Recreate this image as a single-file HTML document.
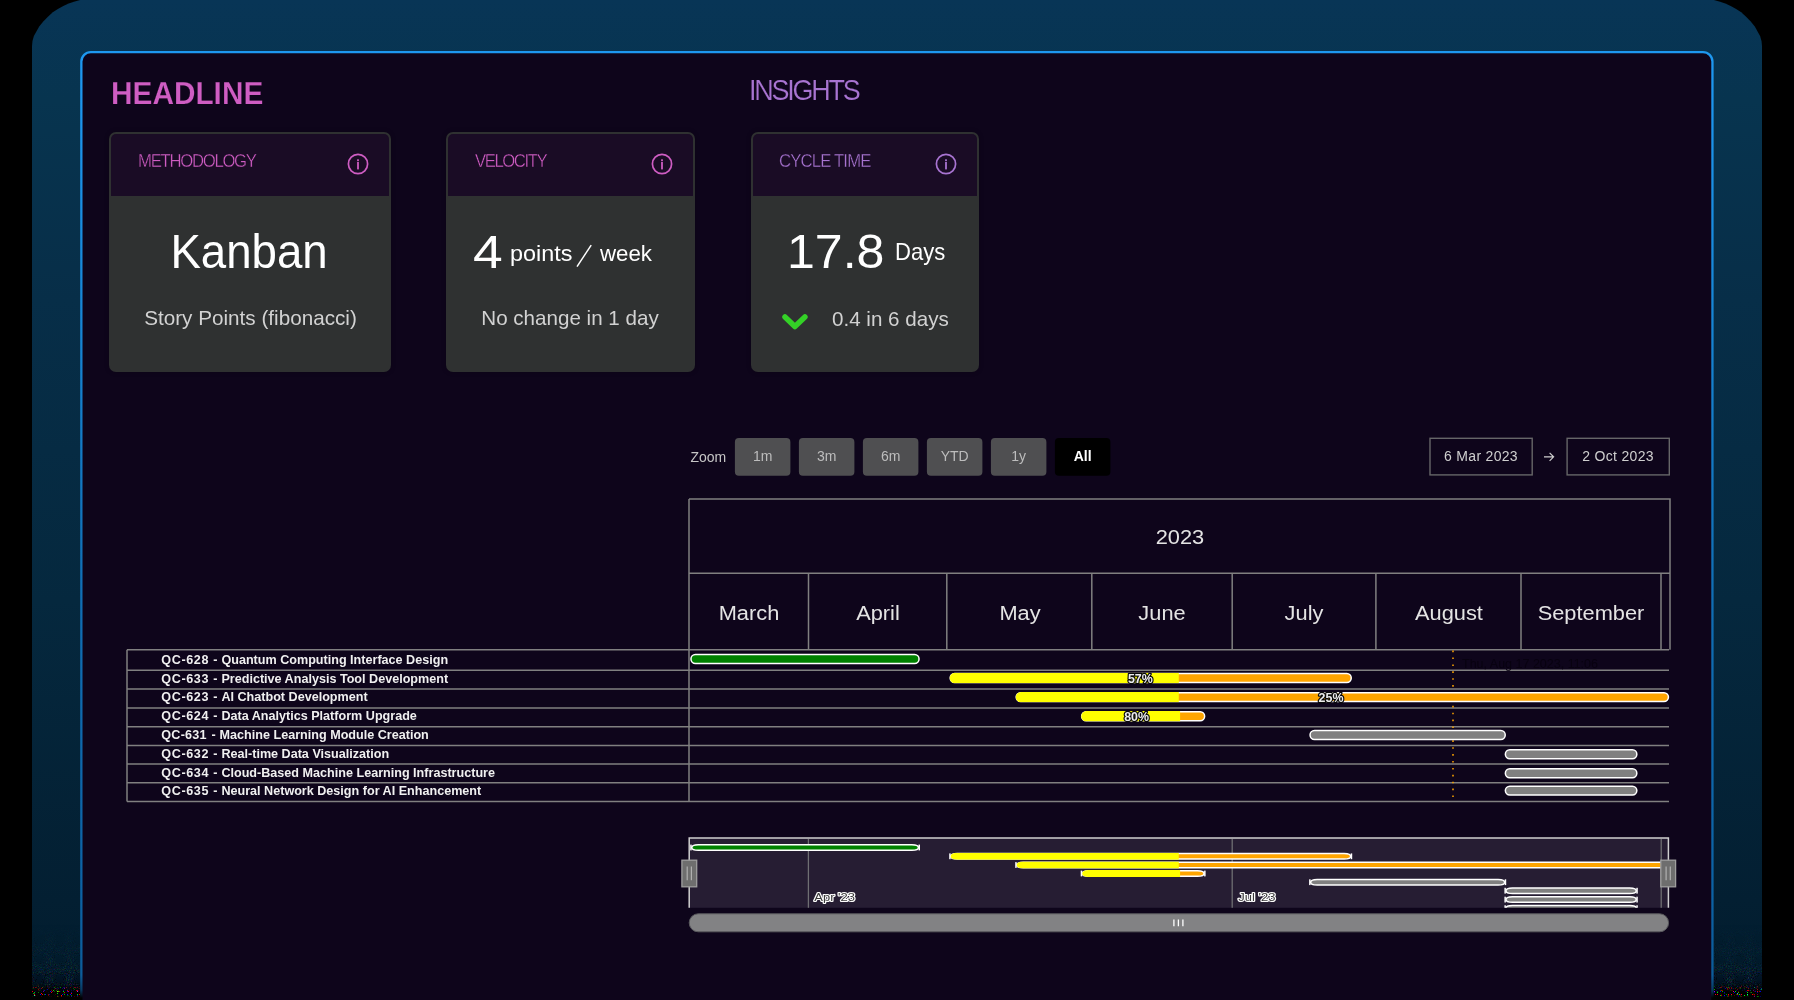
<!DOCTYPE html><html><head><meta charset="utf-8"><title>Dashboard</title><style>
*{box-sizing:border-box;margin:0;padding:0}
html,body{width:1794px;height:1000px;overflow:hidden;background:#000;font-family:"Liberation Sans", sans-serif;}
#fg{position:absolute;left:0;top:0;width:1794px;height:1000px;will-change:transform}
#root{position:relative;width:1794px;height:1000px;overflow:hidden;background:#000}
.frame{position:absolute;left:32px;top:0;width:1730px;height:1010px;clip-path:polygon(0.0px 1010.0px,0.0px 46.0px,0.5px 41.0px,1.9px 36.0px,4.3px 31.7px,7.2px 26.6px,11.5px 21.2px,16.2px 16.6px,20.8px 12.2px,25.9px 9.0px,31.3px 6.1px,36.7px 3.6px,42.8px 1.4px,48.2px 0.0px,1681.8px 0.0px,1687.2px 1.4px,1693.3px 3.6px,1698.7px 6.1px,1704.1px 9.0px,1709.2px 12.2px,1713.8px 16.6px,1718.5px 21.2px,1722.8px 26.6px,1725.7px 31.7px,1728.1px 36.0px,1729.5px 41.0px,1730.0px 46.0px,1730.0px 1010.0px);
 background:linear-gradient(180deg,#083556 0px,#07344f 100px,#072e48 300px,#05283e 600px,#031f32 900px,#021d2f 965px,#02172a 980px,#010d18 989px,#010509 994px,#000 997px);}
.card{position:absolute;top:132px;height:240px;background:#2f3131;border-radius:7px;padding:2px;box-shadow:0 0 5px rgba(0,0,0,.22)}
.chead{height:62px;background:#1a0c25;border-radius:5px 5px 0 0}
.zb{position:absolute;top:438px;width:55.5px;height:37.6px;border-radius:3px;background:#4f4f51;color:#bdbdbd;font-size:14px;line-height:37.6px;text-align:center}
.zb.act{background:#000;color:#fff;font-weight:bold}
.db{position:absolute;top:437.6px;width:104px;height:38px;border:1.4px solid #6b6b6b;color:#cfcfcf;font-size:14px;line-height:35px;text-align:center;letter-spacing:0.3px}
</style></head><body><div id="root"><div class="frame"></div>
<svg style="position:absolute;left:0;top:0" width="1794" height="1000" viewBox="0 0 1794 1000"><defs><linearGradient id="bgr" gradientUnits="userSpaceOnUse" x1="0" y1="0" x2="0" y2="1000"><stop offset="0" stop-color="#1e9af2"/><stop offset="0.1" stop-color="#1d96ee"/><stop offset="0.3" stop-color="#1787d7"/><stop offset="0.6" stop-color="#106eb4"/><stop offset="0.9" stop-color="#0c62a4"/><stop offset="0.975" stop-color="#0c5c9a"/><stop offset="0.99" stop-color="#083a62"/><stop offset="0.998" stop-color="#000"/></linearGradient><linearGradient id="nm" gradientUnits="userSpaceOnUse" x1="0" y1="900" x2="0" y2="997"><stop offset="0.25" stop-color="#fff" stop-opacity="0"/><stop offset="0.6" stop-color="#fff" stop-opacity="0.3"/><stop offset="0.9" stop-color="#fff" stop-opacity="0.8"/><stop offset="1" stop-color="#fff" stop-opacity="1"/></linearGradient><mask id="nmask" maskUnits="userSpaceOnUse" x="0" y="890" width="1794" height="110"><rect x="32" y="900" width="48" height="97" fill="url(#nm)"/><rect x="1714" y="900" width="48" height="97" fill="url(#nm)"/></mask><filter id="nz" x="0" y="0" width="100%" height="100%" color-interpolation-filters="sRGB"><feTurbulence type="fractalNoise" baseFrequency="0.95" numOctaves="1" seed="7"/><feColorMatrix type="matrix" values="7 0 0 0 -4.0  0 7 0 0 -4.0  0 0 7 0 -4.0  0 0 0 0 1"/></filter><filter id="nz3" x="0" y="0" width="100%" height="100%" color-interpolation-filters="sRGB"><feTurbulence type="fractalNoise" baseFrequency="1.7" numOctaves="1" seed="11"/><feColorMatrix type="matrix" values="14 0 0 0 -8.9  0 14 0 0 -8.9  0 0 14 0 -8.9  0 0 0 0 1"/></filter><linearGradient id="bm" gradientUnits="userSpaceOnUse" x1="0" y1="984" x2="0" y2="997"><stop offset="0" stop-color="#fff" stop-opacity="0"/><stop offset="0.6" stop-color="#fff" stop-opacity="0.9"/><stop offset="0.92" stop-color="#fff" stop-opacity="1"/><stop offset="1" stop-color="#fff" stop-opacity="0"/></linearGradient><mask id="bmask" maskUnits="userSpaceOnUse" x="0" y="980" width="1794" height="20"><rect x="32" y="984" width="48" height="13" fill="url(#bm)"/><rect x="1714" y="984" width="48" height="13" fill="url(#bm)"/></mask><filter id="nz2" x="0" y="0" width="100%" height="100%" color-interpolation-filters="sRGB"><feTurbulence type="fractalNoise" baseFrequency="0.9" numOctaves="1" seed="3"/><feColorMatrix type="matrix" values="0 0 0 0 0  0 0 0 0 0  0 0 0 0 0  9 0 0 0 -5.2"/></filter></defs><g mask="url(#nmask)"><rect x="0" y="900" width="1794" height="100" filter="url(#nz2)"/><rect x="0" y="900" width="1794" height="100" filter="url(#nz)" opacity="0.22" style="mix-blend-mode:screen"/></g><g mask="url(#bmask)"><rect x="0" y="980" width="1794" height="20" filter="url(#nz3)" style="mix-blend-mode:screen"/></g><rect x="81.35" y="52.1" width="1631.1" height="1000" rx="9.5" fill="#0e051b" stroke="url(#bgr)" stroke-width="2.3"/></svg>
<div id="fg">
<div style="position:absolute;top:77.85px;font-size:31.3px;line-height:1;color:#cf5dc3;font-weight:bold;white-space:nowrap;left:111.00px;transform:scaleX(0.952);transform-origin:left center;-webkit-text-stroke:0.25px #0e051b;">HEADLINE</div>
<div style="position:absolute;top:74.85px;font-size:29.3px;line-height:1;color:#a874d1;font-weight:normal;white-space:nowrap;letter-spacing:-2.4075066867236035px;left:748.70px;transform:scaleX(0.92);transform-origin:left center;-webkit-text-stroke:0.2px #0e051b;">INSIGHTS</div>
<div class="card" style="left:109px;width:282px"><div class="chead"></div></div>
<div style="position:absolute;top:152.00px;font-size:18px;line-height:1;color:#cf5dc3;font-weight:normal;white-space:nowrap;letter-spacing:-1.4057104502688176px;left:137.60px;transform:scaleX(0.93);transform-origin:left center;-webkit-text-stroke:0.35px #1a0c25;">METHODOLOGY</div>
<svg style="position:absolute;left:344.6px;top:151.4px" width="26" height="26" viewBox="-13 -13 26 26"><circle r="9.6" fill="none" stroke="#cf5dc3" stroke-width="1.7"/><rect x="-0.9" y="-4.7" width="1.8" height="1.9" fill="#cf5dc3"/><rect x="-0.9" y="-2.0" width="1.8" height="7.4" fill="#cf5dc3"/></svg>
<div class="card" style="left:446px;width:249px"><div class="chead"></div></div>
<div style="position:absolute;top:152.00px;font-size:18px;line-height:1;color:#cf5dc3;font-weight:normal;white-space:nowrap;letter-spacing:-1.5657700172811084px;left:475.40px;transform:scaleX(0.93);transform-origin:left center;-webkit-text-stroke:0.35px #1a0c25;">VELOCITY</div>
<svg style="position:absolute;left:648.6px;top:151.4px" width="26" height="26" viewBox="-13 -13 26 26"><circle r="9.6" fill="none" stroke="#cf5dc3" stroke-width="1.7"/><rect x="-0.9" y="-4.7" width="1.8" height="1.9" fill="#cf5dc3"/><rect x="-0.9" y="-2.0" width="1.8" height="7.4" fill="#cf5dc3"/></svg>
<div class="card" style="left:751px;width:228px"><div class="chead"></div></div>
<div style="position:absolute;top:152.00px;font-size:18px;line-height:1;color:#a874d1;font-weight:normal;white-space:nowrap;letter-spacing:-0.9264797267025087px;left:779.30px;transform:scaleX(0.93);transform-origin:left center;-webkit-text-stroke:0.35px #1a0c25;">CYCLE TIME</div>
<svg style="position:absolute;left:932.6px;top:151.4px" width="26" height="26" viewBox="-13 -13 26 26"><circle r="9.6" fill="none" stroke="#a874d1" stroke-width="1.7"/><rect x="-0.9" y="-4.7" width="1.8" height="1.9" fill="#a874d1"/><rect x="-0.9" y="-2.0" width="1.8" height="7.4" fill="#a874d1"/></svg>
<div style="position:absolute;top:227.50px;font-size:48.0px;line-height:1;color:#ffffff;font-weight:normal;white-space:nowrap;left:-251.10px;width:1000px;text-align:center;transform:scaleX(0.95);transform-origin:center center;">Kanban</div>
<div style="position:absolute;top:308.15px;font-size:20.7px;line-height:1;color:#d2d2d2;font-weight:normal;white-space:nowrap;left:-249.50px;width:1000px;text-align:center;">Story Points (fibonacci)</div>
<div style="position:absolute;top:229.00px;font-size:46.0px;line-height:1;color:#ffffff;font-weight:normal;white-space:nowrap;left:473.40px;transform:scaleX(1.16);transform-origin:left center;">4</div>
<div style="position:absolute;top:243.30px;font-size:22.4px;line-height:1;color:#ffffff;font-weight:normal;white-space:nowrap;left:509.70px;transform:scaleX(1.045);transform-origin:left center;">points</div>
<svg style="position:absolute;left:570px;top:240px" width="26" height="32" viewBox="570 240 26 32"><path d="M577.0 266.7 L591.2 245.2" stroke="#fff" stroke-width="1.5" fill="none"/></svg>
<div style="position:absolute;top:243.30px;font-size:22.4px;line-height:1;color:#ffffff;font-weight:normal;white-space:nowrap;left:600.20px;transform:scaleX(0.995);transform-origin:left center;">week</div>
<div style="position:absolute;top:308.20px;font-size:20.6px;line-height:1;color:#d2d2d2;font-weight:normal;white-space:nowrap;left:70.00px;width:1000px;text-align:center;">No change in 1 day</div>
<div style="position:absolute;top:227.65px;font-size:47.7px;line-height:1;color:#ffffff;font-weight:normal;white-space:nowrap;left:786.60px;transform:scaleX(1.05);transform-origin:left center;">17.8</div>
<div style="position:absolute;top:241.20px;font-size:23.6px;line-height:1;color:#ffffff;font-weight:normal;white-space:nowrap;left:894.80px;transform:scaleX(0.935);transform-origin:left center;">Days</div>
<div style="position:absolute;top:309.20px;font-size:20.6px;line-height:1;color:#d2d2d2;font-weight:normal;white-space:nowrap;left:832.00px;">0.4 in 6 days</div>
<svg style="position:absolute;left:778px;top:308px" width="34" height="28" viewBox="778 308 34 28"><path d="M785.0 317.0 L794.9 326.5 L804.9 317.0" fill="none" stroke="#34d127" stroke-width="5.5" stroke-linecap="round" stroke-linejoin="round"/></svg>
<div style="position:absolute;top:450.00px;font-size:14px;line-height:1;color:#c6c6c6;font-weight:normal;white-space:nowrap;left:690.50px;">Zoom</div>
<svg style="position:absolute;left:0;top:0" width="1794" height="1000" viewBox="0 0 1794 1000"><rect x="734.90" y="438" width="55.5" height="37.7" rx="4" fill="#4f4f51"/><rect x="798.90" y="438" width="55.5" height="37.7" rx="4" fill="#4f4f51"/><rect x="862.90" y="438" width="55.5" height="37.7" rx="4" fill="#4f4f51"/><rect x="926.90" y="438" width="55.5" height="37.7" rx="4" fill="#4f4f51"/><rect x="990.90" y="438" width="55.5" height="37.7" rx="4" fill="#4f4f51"/><rect x="1054.90" y="438" width="55.5" height="37.7" rx="4" fill="#000"/><rect x="1430.0" y="438.3" width="102.2" height="36.6" fill="none" stroke="#666668" stroke-width="1.4"/><rect x="1567.1" y="438.3" width="102.2" height="36.6" fill="none" stroke="#666668" stroke-width="1.4"/></svg>
<div style="position:absolute;top:449.00px;font-size:14px;line-height:1;color:#bdbdbd;font-weight:normal;white-space:nowrap;left:262.70px;width:1000px;text-align:center;">1m</div>
<div style="position:absolute;top:449.00px;font-size:14px;line-height:1;color:#bdbdbd;font-weight:normal;white-space:nowrap;left:326.70px;width:1000px;text-align:center;">3m</div>
<div style="position:absolute;top:449.00px;font-size:14px;line-height:1;color:#bdbdbd;font-weight:normal;white-space:nowrap;left:390.70px;width:1000px;text-align:center;">6m</div>
<div style="position:absolute;top:449.00px;font-size:14px;line-height:1;color:#bdbdbd;font-weight:normal;white-space:nowrap;left:454.70px;width:1000px;text-align:center;">YTD</div>
<div style="position:absolute;top:449.00px;font-size:14px;line-height:1;color:#bdbdbd;font-weight:normal;white-space:nowrap;left:518.70px;width:1000px;text-align:center;">1y</div>
<div style="position:absolute;top:449.00px;font-size:14px;line-height:1;color:#fff;font-weight:bold;white-space:nowrap;left:582.70px;width:1000px;text-align:center;">All</div>
<div style="position:absolute;top:449.00px;font-size:14px;line-height:1;color:#cfcfcf;font-weight:normal;white-space:nowrap;letter-spacing:0.3px;left:981.00px;width:1000px;text-align:center;">6 Mar 2023</div>
<div style="position:absolute;top:449.00px;font-size:14px;line-height:1;color:#cfcfcf;font-weight:normal;white-space:nowrap;letter-spacing:0.3px;left:1118.10px;width:1000px;text-align:center;">2 Oct 2023</div>
<svg style="position:absolute;left:1541px;top:449px" width="16" height="16" viewBox="1541 449 16 16"><path d="M1544 456.8 H1553.6 M1549.6 452.8 L1553.6 456.8 L1549.6 460.8" fill="none" stroke="#cfcfcf" stroke-width="1.2"/></svg>
<svg style="position:absolute;left:0;top:0" width="1794" height="1000" viewBox="0 0 1794 1000"><g fill="none" stroke="#808080" stroke-width="1.5"><path d="M689 499 H1670 V649.7"/><path d="M689 499 V801.7"/><path d="M689 573.2 H1670"/><path d="M808.5 573.2 V649.7"/><path d="M946.8 573.2 V649.7"/><path d="M1091.8 573.2 V649.7"/><path d="M1232.2 573.2 V649.7"/><path d="M1375.9 573.2 V649.7"/><path d="M1521 573.2 V649.7"/><path d="M1661 573.2 V649.7"/><path d="M127 649.7 H1669"/><path d="M127 670.2 H1669"/><path d="M127 689.1 H1669"/><path d="M127 707.9 H1669"/><path d="M127 726.8 H1669"/><path d="M127 745.5 H1669"/><path d="M127 764.0 H1669"/><path d="M127 782.8 H1669"/><path d="M127 801.6 H1669"/><path d="M127 649.7 V801.6"/></g><path d="M1453 650.6 V802.4" fill="none" stroke="#ffa500" stroke-width="1.5" stroke-dasharray="1.6 5.3"/><rect x="690.95" y="654.55" width="228.10" height="8.90" rx="4.45" fill="#008000" stroke="#fff" stroke-width="1.5"/><rect x="950.15" y="673.60" width="401.10" height="8.90" rx="4.45" fill="#ffa500" stroke="#fff" stroke-width="1.5"/><clipPath id="bc1"><rect x="949.75" y="672.85" width="402.25" height="10.40" rx="5.20"/></clipPath><rect clip-path="url(#bc1)" x="949.40" y="672.85" width="229.40" height="10.40" fill="#ffff00"/><rect x="1016.15" y="692.65" width="652.30" height="8.90" rx="4.45" fill="#ffa500" stroke="#fff" stroke-width="1.5"/><clipPath id="bc2"><rect x="1015.75" y="691.90" width="653.45" height="10.40" rx="5.20"/></clipPath><rect clip-path="url(#bc2)" x="1015.40" y="691.90" width="163.40" height="10.40" fill="#ffff00"/><rect x="1081.65" y="711.75" width="123.00" height="8.90" rx="4.45" fill="#ffa500" stroke="#fff" stroke-width="1.5"/><clipPath id="bc3"><rect x="1081.25" y="711.00" width="124.15" height="10.40" rx="5.20"/></clipPath><rect clip-path="url(#bc3)" x="1080.90" y="711.00" width="99.20" height="10.40" fill="#ffff00"/><rect x="1310.05" y="730.55" width="195.20" height="8.90" rx="4.45" fill="#808080" stroke="#fff" stroke-width="1.5"/><rect x="1505.35" y="749.85" width="131.50" height="8.90" rx="4.45" fill="#808080" stroke="#fff" stroke-width="1.5"/><rect x="1505.35" y="768.85" width="131.50" height="8.90" rx="4.45" fill="#808080" stroke="#fff" stroke-width="1.5"/><rect x="1505.35" y="786.15" width="131.50" height="8.90" rx="4.45" fill="#808080" stroke="#fff" stroke-width="1.5"/><rect x="689" y="838" width="979.5" height="69.8" fill="#261d33"/><g fill="none" stroke="#6f6f73" stroke-width="1.3"><path d="M808.4 839 V907.8"/><path d="M1232.2 839 V907.8"/><path d="M1661.2 839 V907.8"/></g><clipPath id="navclip"><rect x="689" y="838" width="980" height="69.8"/></clipPath><g clip-path="url(#navclip)"><rect x="691.75" y="844.75" width="226.70" height="5.50" rx="6.5" ry="2.75" fill="#008000" stroke="#fff" stroke-width="1.5"/><rect x="690.20" y="844.60" width="1.5" height="5.8" fill="#fff"/><rect x="918.50" y="844.60" width="1.5" height="5.8" fill="#fff"/><rect x="950.75" y="853.55" width="399.90" height="5.50" rx="6.5" ry="2.75" fill="#ffa500" stroke="#fff" stroke-width="1.5"/><clipPath id="nc4"><rect x="950.30" y="852.80" width="400.80" height="7.00" rx="7" ry="3.50"/></clipPath><rect clip-path="url(#nc4)" x="949.40" y="852.80" width="229.40" height="7.00" fill="#ffff00"/><rect x="949.20" y="853.40" width="1.5" height="5.8" fill="#fff"/><rect x="1350.70" y="853.40" width="1.5" height="5.8" fill="#fff"/><rect x="1016.75" y="862.25" width="651.10" height="5.50" rx="6.5" ry="2.75" fill="#ffa500" stroke="#fff" stroke-width="1.5"/><clipPath id="nc5"><rect x="1016.30" y="861.50" width="652.00" height="7.00" rx="7" ry="3.50"/></clipPath><rect clip-path="url(#nc5)" x="1015.40" y="861.50" width="163.40" height="7.00" fill="#ffff00"/><rect x="1015.20" y="862.10" width="1.5" height="5.8" fill="#fff"/><rect x="1667.90" y="862.10" width="1.5" height="5.8" fill="#fff"/><rect x="1082.25" y="870.75" width="121.80" height="5.50" rx="6.5" ry="2.75" fill="#ffa500" stroke="#fff" stroke-width="1.5"/><clipPath id="nc6"><rect x="1081.80" y="870.00" width="122.70" height="7.00" rx="7" ry="3.50"/></clipPath><rect clip-path="url(#nc6)" x="1080.90" y="870.00" width="99.20" height="7.00" fill="#ffff00"/><rect x="1080.70" y="870.60" width="1.5" height="5.8" fill="#fff"/><rect x="1204.10" y="870.60" width="1.5" height="5.8" fill="#fff"/><rect x="1310.65" y="879.45" width="194.00" height="5.50" rx="6.5" ry="2.75" fill="#808080" stroke="#fff" stroke-width="1.5"/><rect x="1309.10" y="879.30" width="1.5" height="5.8" fill="#fff"/><rect x="1504.70" y="879.30" width="1.5" height="5.8" fill="#fff"/><rect x="1505.95" y="887.95" width="130.30" height="5.50" rx="6.5" ry="2.75" fill="#808080" stroke="#fff" stroke-width="1.5"/><rect x="1504.40" y="887.80" width="1.5" height="5.8" fill="#fff"/><rect x="1636.30" y="887.80" width="1.5" height="5.8" fill="#fff"/><rect x="1505.95" y="896.85" width="130.30" height="5.50" rx="6.5" ry="2.75" fill="#808080" stroke="#fff" stroke-width="1.5"/><rect x="1504.40" y="896.70" width="1.5" height="5.8" fill="#fff"/><rect x="1636.30" y="896.70" width="1.5" height="5.8" fill="#fff"/><rect x="1505.95" y="905.45" width="130.30" height="5.50" rx="6.5" ry="2.75" fill="#808080" stroke="#fff" stroke-width="1.5"/><rect x="1504.40" y="905.30" width="1.5" height="5.8" fill="#fff"/><rect x="1636.30" y="905.30" width="1.5" height="5.8" fill="#fff"/></g><g fill="none" stroke="#cfcfcf" stroke-width="1.5"><path d="M689.2 907.8 V838 H1668.4 V907.8"/></g><rect x="681.90" y="860.2" width="14.8" height="26.6" fill="#6e6e6e" stroke="#9e9e9e" stroke-width="1.3"/><path d="M687.20 866.4 V880.2 M691.40 866.4 V880.2" stroke="#b0b0b0" stroke-width="1.2" fill="none"/><rect x="1660.80" y="860.2" width="14.8" height="26.6" fill="#6e6e6e" stroke="#9e9e9e" stroke-width="1.3"/><path d="M1666.10 866.4 V880.2 M1670.30 866.4 V880.2" stroke="#b0b0b0" stroke-width="1.2" fill="none"/><rect x="689.2" y="913.8" width="979.4" height="18" rx="9" fill="#828284" stroke="#5a5a5e" stroke-width="1"/><path d="M1173.9 919.4 V926.2 M1178.4 919.4 V926.2 M1182.9 919.4 V926.2" stroke="#fff" stroke-width="1.3" fill="none"/><text transform="translate(1140.3,682.5) scale(1,1)" font-family="Liberation Sans, sans-serif" font-size="12.4" font-weight="bold" text-anchor="middle" fill="#ececec" stroke="#0a0a0a" stroke-width="2.4" stroke-linejoin="round" paint-order="stroke">57%</text><text transform="translate(1331.0,701.5) scale(1,1)" font-family="Liberation Sans, sans-serif" font-size="12.4" font-weight="bold" text-anchor="middle" fill="#ececec" stroke="#0a0a0a" stroke-width="2.4" stroke-linejoin="round" paint-order="stroke">25%</text><text transform="translate(1136.6,720.7) scale(1,1)" font-family="Liberation Sans, sans-serif" font-size="12.4" font-weight="bold" text-anchor="middle" fill="#ececec" stroke="#0a0a0a" stroke-width="2.4" stroke-linejoin="round" paint-order="stroke">80%</text><text transform="translate(814.3,901.3) scale(1.12,1)" font-family="Liberation Sans, sans-serif" font-size="11.6" font-weight="normal" text-anchor="start" fill="#3a3a3a" stroke="#fff" stroke-width="2.2" stroke-linejoin="round" paint-order="stroke">Apr &#39;23</text><text transform="translate(1238.3,901.3) scale(1.12,1)" font-family="Liberation Sans, sans-serif" font-size="11.6" font-weight="normal" text-anchor="start" fill="#3a3a3a" stroke="#fff" stroke-width="2.2" stroke-linejoin="round" paint-order="stroke">Jul &#39;23</text></svg>
<div style="position:absolute;top:527.00px;font-size:20px;line-height:1;color:#e4e4e4;font-weight:normal;white-space:nowrap;left:679.50px;width:1000px;text-align:center;transform:scaleX(1.09);transform-origin:center center;">2023</div>
<div style="position:absolute;top:603.00px;font-size:20px;line-height:1;color:#e4e4e4;font-weight:normal;white-space:nowrap;left:248.50px;width:1000px;text-align:center;transform:scaleX(1.09);transform-origin:center center;">March</div>
<div style="position:absolute;top:603.00px;font-size:20px;line-height:1;color:#e4e4e4;font-weight:normal;white-space:nowrap;left:377.70px;width:1000px;text-align:center;transform:scaleX(1.09);transform-origin:center center;">April</div>
<div style="position:absolute;top:603.00px;font-size:20px;line-height:1;color:#e4e4e4;font-weight:normal;white-space:nowrap;left:519.50px;width:1000px;text-align:center;transform:scaleX(1.09);transform-origin:center center;">May</div>
<div style="position:absolute;top:603.00px;font-size:20px;line-height:1;color:#e4e4e4;font-weight:normal;white-space:nowrap;left:662.00px;width:1000px;text-align:center;transform:scaleX(1.09);transform-origin:center center;">June</div>
<div style="position:absolute;top:603.00px;font-size:20px;line-height:1;color:#e4e4e4;font-weight:normal;white-space:nowrap;left:803.50px;width:1000px;text-align:center;transform:scaleX(1.09);transform-origin:center center;">July</div>
<div style="position:absolute;top:603.00px;font-size:20px;line-height:1;color:#e4e4e4;font-weight:normal;white-space:nowrap;left:948.50px;width:1000px;text-align:center;transform:scaleX(1.09);transform-origin:center center;">August</div>
<div style="position:absolute;top:603.00px;font-size:20px;line-height:1;color:#e4e4e4;font-weight:normal;white-space:nowrap;left:1090.50px;width:1000px;text-align:center;transform:scaleX(1.09);transform-origin:center center;">September</div>
<div style="position:absolute;top:653.70px;font-size:12.6px;line-height:1;color:#f0f0f0;font-weight:bold;white-space:nowrap;letter-spacing:0.6px;left:161.30px;">QC-628</div>
<div style="position:absolute;top:653.70px;font-size:12.6px;line-height:1;color:#f0f0f0;font-weight:bold;white-space:nowrap;left:213.30px;">-</div>
<div style="position:absolute;top:653.70px;font-size:12.6px;line-height:1;color:#f0f0f0;font-weight:bold;white-space:nowrap;left:221.40px;">Quantum Computing Interface Design</div>
<div style="position:absolute;top:672.70px;font-size:12.6px;line-height:1;color:#f0f0f0;font-weight:bold;white-space:nowrap;letter-spacing:0.6px;left:161.30px;">QC-633</div>
<div style="position:absolute;top:672.70px;font-size:12.6px;line-height:1;color:#f0f0f0;font-weight:bold;white-space:nowrap;left:213.30px;">-</div>
<div style="position:absolute;top:672.70px;font-size:12.6px;line-height:1;color:#f0f0f0;font-weight:bold;white-space:nowrap;left:221.40px;">Predictive Analysis Tool Development</div>
<div style="position:absolute;top:690.70px;font-size:12.6px;line-height:1;color:#f0f0f0;font-weight:bold;white-space:nowrap;letter-spacing:0.6px;left:161.30px;">QC-623</div>
<div style="position:absolute;top:690.70px;font-size:12.6px;line-height:1;color:#f0f0f0;font-weight:bold;white-space:nowrap;left:213.30px;">-</div>
<div style="position:absolute;top:690.70px;font-size:12.6px;line-height:1;color:#f0f0f0;font-weight:bold;white-space:nowrap;left:221.40px;">AI Chatbot Development</div>
<div style="position:absolute;top:709.70px;font-size:12.6px;line-height:1;color:#f0f0f0;font-weight:bold;white-space:nowrap;letter-spacing:0.6px;left:161.30px;">QC-624</div>
<div style="position:absolute;top:709.70px;font-size:12.6px;line-height:1;color:#f0f0f0;font-weight:bold;white-space:nowrap;left:213.30px;">-</div>
<div style="position:absolute;top:709.70px;font-size:12.6px;line-height:1;color:#f0f0f0;font-weight:bold;white-space:nowrap;left:221.40px;">Data Analytics Platform Upgrade</div>
<div style="position:absolute;top:728.70px;font-size:12.6px;line-height:1;color:#f0f0f0;font-weight:bold;white-space:nowrap;letter-spacing:0.24px;left:161.30px;">QC-631</div>
<div style="position:absolute;top:728.70px;font-size:12.6px;line-height:1;color:#f0f0f0;font-weight:bold;white-space:nowrap;left:211.50px;">-</div>
<div style="position:absolute;top:728.70px;font-size:12.6px;line-height:1;color:#f0f0f0;font-weight:bold;white-space:nowrap;left:219.60px;">Machine Learning Module Creation</div>
<div style="position:absolute;top:747.70px;font-size:12.6px;line-height:1;color:#f0f0f0;font-weight:bold;white-space:nowrap;letter-spacing:0.6px;left:161.30px;">QC-632</div>
<div style="position:absolute;top:747.70px;font-size:12.6px;line-height:1;color:#f0f0f0;font-weight:bold;white-space:nowrap;left:213.30px;">-</div>
<div style="position:absolute;top:747.70px;font-size:12.6px;line-height:1;color:#f0f0f0;font-weight:bold;white-space:nowrap;left:221.40px;">Real-time Data Visualization</div>
<div style="position:absolute;top:766.70px;font-size:12.6px;line-height:1;color:#f0f0f0;font-weight:bold;white-space:nowrap;letter-spacing:0.6px;left:161.30px;">QC-634</div>
<div style="position:absolute;top:766.70px;font-size:12.6px;line-height:1;color:#f0f0f0;font-weight:bold;white-space:nowrap;left:213.30px;">-</div>
<div style="position:absolute;top:766.70px;font-size:12.6px;line-height:1;color:#f0f0f0;font-weight:bold;white-space:nowrap;left:221.40px;">Cloud-Based Machine Learning Infrastructure</div>
<div style="position:absolute;top:784.70px;font-size:12.6px;line-height:1;color:#f0f0f0;font-weight:bold;white-space:nowrap;letter-spacing:0.6px;left:161.30px;">QC-635</div>
<div style="position:absolute;top:784.70px;font-size:12.6px;line-height:1;color:#f0f0f0;font-weight:bold;white-space:nowrap;left:213.30px;">-</div>
<div style="position:absolute;top:784.70px;font-size:12.6px;line-height:1;color:#f0f0f0;font-weight:bold;white-space:nowrap;left:221.40px;">Neural Network Design for AI Enhancement</div>
<div style="position:absolute;top:657.75px;font-size:12.5px;line-height:1;color:#080210;font-weight:normal;white-space:nowrap;left:1462.00px;">Thu, Aug 17 2023, 11:06</div>
</div></div></body></html>
